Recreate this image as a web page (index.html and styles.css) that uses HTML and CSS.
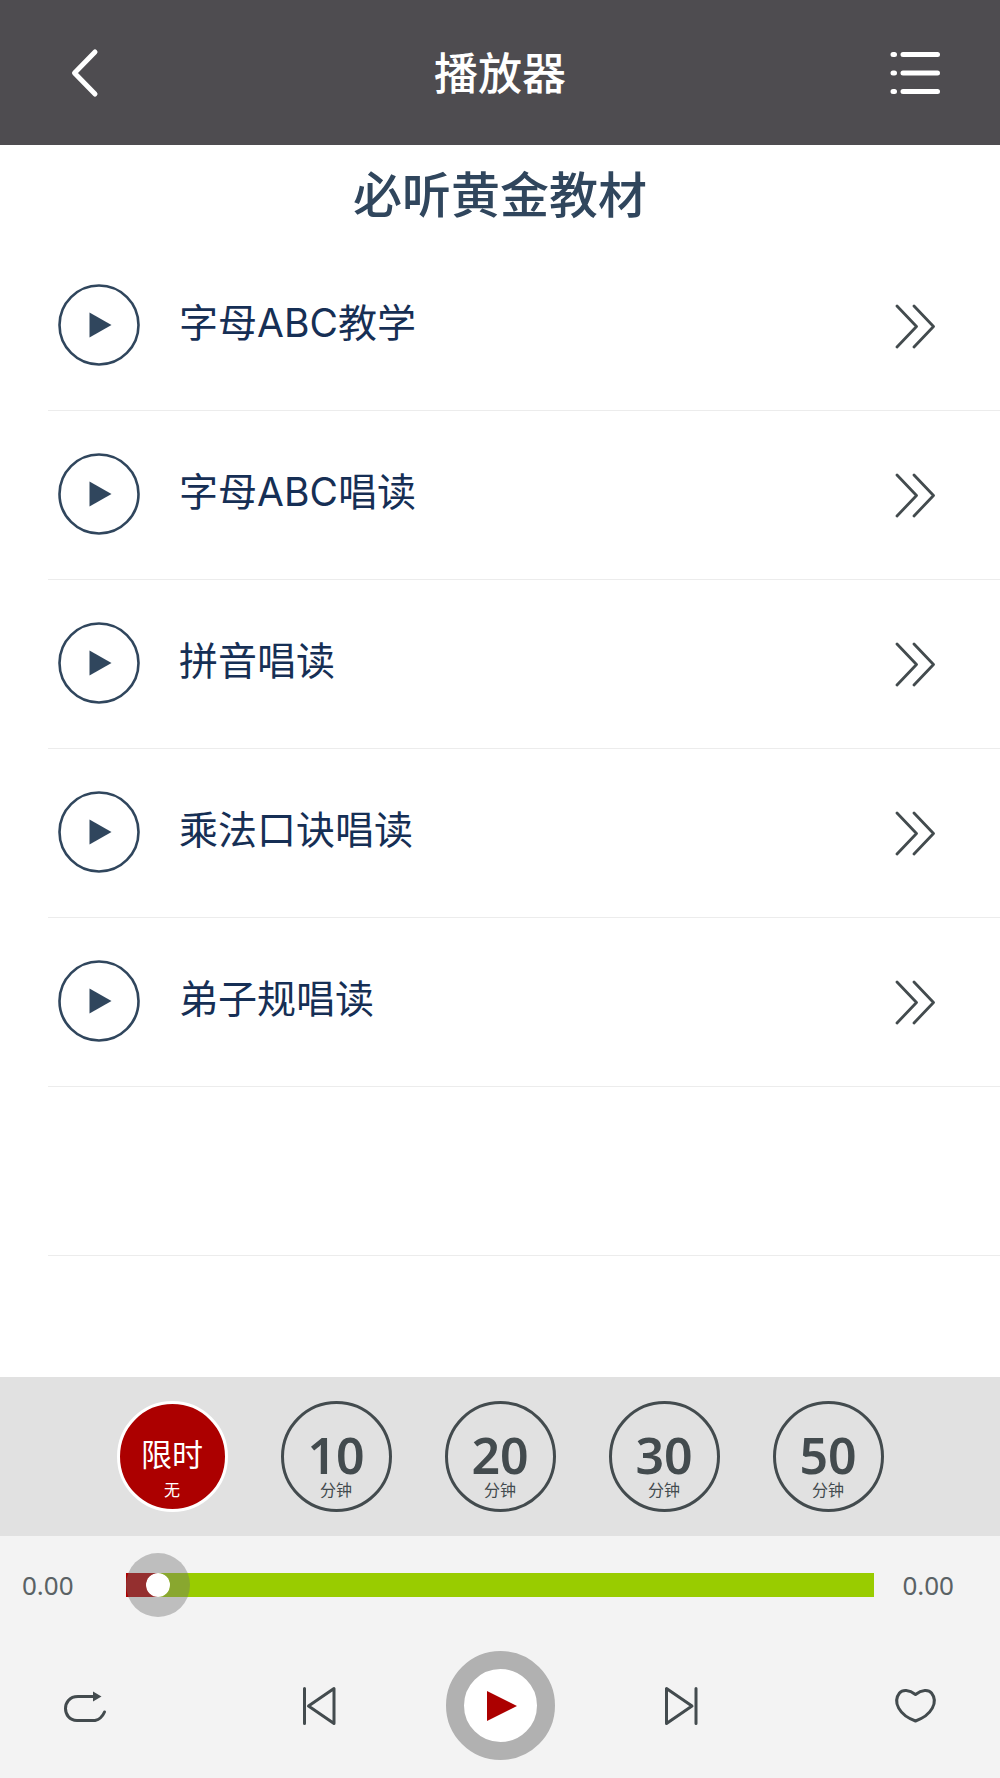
FILE: index.html
```html
<!DOCTYPE html>
<html lang="zh-CN">
<head>
<meta charset="utf-8">
<meta name="viewport" content="width=device-width, initial-scale=1">
<title>播放器</title>
<link rel="stylesheet" href="styles.css">
</head>
<body>
<svg class="sprite" aria-hidden="true">
  <symbol id="disc-play" viewBox="0 0 82 82"><circle cx="41" cy="41" r="39.500" fill="none" stroke="currentColor" stroke-width="2.600"/><path d="M31.500 28.500L53.500 41L31.500 53.500z" fill="currentColor"/></symbol>
  <symbol id="more" viewBox="0 0 40 46"><path d="M2 2L21.500 22.500L2 43M19 2L38.500 22.500L19 43" fill="none" stroke="currentColor" stroke-width="2.800" stroke-linecap="round" stroke-linejoin="round"/></symbol>
</svg>
<header class="topbar">
  <button class="icon-button" type="button" aria-label="返回">
    <svg width="50" height="50" viewBox="0 0 50 50"><path d="M35 4L14.500 25L35 46" fill="none" stroke="currentColor" stroke-width="5" stroke-linecap="round" stroke-linejoin="round"/></svg>
  </button>
  <h1 class="topbar-title">播放器</h1>
  <button class="icon-button" type="button" aria-label="列表">
    <svg width="50" height="50" viewBox="0 0 50 50"><path d="M3 6.500H4.500M13 6.500H47.500M3 25H4.500M13 25H47.500M3 43.500H4.500M13 43.500H47.500" fill="none" stroke="currentColor" stroke-width="5" stroke-linecap="round"/></svg>
  </button>
</header>
<main class="content">
  <h2 class="album">必听黄金教材</h2>
  <ul class="tracks">
    <li class="track"><button class="track-play" type="button" aria-label="播放"><svg width="82" height="82"><use href="#disc-play"/></svg></button><a class="track-link" href="#"><span class="track-name">字母ABC教学</span><svg class="more" width="40" height="46"><use href="#more"/></svg></a></li>
    <li class="track"><button class="track-play" type="button" aria-label="播放"><svg width="82" height="82"><use href="#disc-play"/></svg></button><a class="track-link" href="#"><span class="track-name">字母ABC唱读</span><svg class="more" width="40" height="46"><use href="#more"/></svg></a></li>
    <li class="track"><button class="track-play" type="button" aria-label="播放"><svg width="82" height="82"><use href="#disc-play"/></svg></button><a class="track-link" href="#"><span class="track-name">拼音唱读</span><svg class="more" width="40" height="46"><use href="#more"/></svg></a></li>
    <li class="track"><button class="track-play" type="button" aria-label="播放"><svg width="82" height="82"><use href="#disc-play"/></svg></button><a class="track-link" href="#"><span class="track-name">乘法口诀唱读</span><svg class="more" width="40" height="46"><use href="#more"/></svg></a></li>
    <li class="track"><button class="track-play" type="button" aria-label="播放"><svg width="82" height="82"><use href="#disc-play"/></svg></button><a class="track-link" href="#"><span class="track-name">弟子规唱读</span><svg class="more" width="40" height="46"><use href="#more"/></svg></a></li>
    <li class="track" aria-hidden="true"></li>
  </ul>
</main>
<section class="timers" aria-label="定时">
  <button class="timer timer-active" type="button"><span class="timer-label">限时</span><span class="timer-unit">无</span></button>
  <button class="timer" type="button"><span class="timer-value">10</span><span class="timer-unit">分钟</span></button>
  <button class="timer" type="button"><span class="timer-value">20</span><span class="timer-unit">分钟</span></button>
  <button class="timer" type="button"><span class="timer-value">30</span><span class="timer-unit">分钟</span></button>
  <button class="timer" type="button"><span class="timer-value">50</span><span class="timer-unit">分钟</span></button>
</section>
<footer class="player">
  <div class="progress">
    <label class="time" for="seek">0.00</label>
    <input class="seek" id="seek" type="range" min="0" max="100" value="0">
    <output class="time time-total" for="seek">0.00</output>
  </div>
  <div class="controls">
    <button class="icon-button" type="button" aria-label="循环">
      <svg width="50" height="50" viewBox="0 0 50 50"><path d="M34 15.500H18C9 15.500 5.500 22 5.500 27.500C5.500 33 9 39.500 17 39.500H35Q41.500 38 44.500 31" fill="none" stroke="currentColor" stroke-width="3" stroke-linecap="round"/><path d="M33 10.500L41.500 15.500L33 20.500z" fill="currentColor"/></svg>
    </button>
    <div class="transport">
      <button class="icon-button" type="button" aria-label="上一首">
        <svg width="50" height="50" viewBox="0 0 50 50"><path d="M9.500 7.500V42.500M39 7.500V42.500L13.500 25z" fill="none" stroke="currentColor" stroke-width="3" stroke-linecap="round" stroke-linejoin="round"/></svg>
      </button>
      <button class="play" type="button" aria-label="播放">
        <svg width="36" height="30" viewBox="0 0 36 30"><path d="M5 0L35 15L5 30z" fill="currentColor"/></svg>
      </button>
      <button class="icon-button" type="button" aria-label="下一首">
        <svg width="50" height="50" viewBox="0 0 50 50"><path d="M40 7.500V42.500M10.500 7.500V42.500L36 25z" fill="none" stroke="currentColor" stroke-width="3" stroke-linecap="round" stroke-linejoin="round"/></svg>
      </button>
    </div>
    <button class="icon-button" type="button" aria-label="收藏">
      <svg width="50" height="50" viewBox="0 0 50 50"><path d="M25.500 13.500C19 8.500 12.500 8.500 9.500 12C2.500 21 9 34 25.500 40C42 34 48.500 21 41.500 12C38.500 8.500 32 8.500 25.500 13.500z" fill="none" stroke="currentColor" stroke-width="3" stroke-linejoin="round"/></svg>
    </button>
  </div>
</footer>
</body>
</html>
```
FILE: styles.css
```css
* {
  box-sizing: border-box;
}

body {
  display: flex;
  flex-direction: column;
  min-height: 100vh;
  margin: 0;
  background: #fff;
  color: #434b4e;
  font-family: Inter, "Noto Sans CJK SC", sans-serif;
}

button {
  padding: 0;
  border: 0;
  background: none;
  color: inherit;
  font: inherit;
  cursor: pointer;
}

svg {
  display: block;
}

.sprite {
  display: none;
}

.icon-button {
  flex: none;
  width: 50px;
  height: 50px;
}

.topbar {
  display: flex;
  align-items: center;
  justify-content: space-between;
  height: 145px;
  padding: 0 60px;
  background: #4e4c50;
  color: #fff;
}

.topbar-title {
  margin: 0;
  padding-top: 2px;
  font-size: 44px;
  line-height: 64px;
  font-weight: 500;
}

.content {
  flex: 1;
}

.album {
  margin: 0;
  padding-top: 4px;
  color: #30465d;
  font-size: 49px;
  line-height: 93px;
  font-weight: 500;
  text-align: center;
}

.tracks {
  margin: 0;
  padding: 0 0 0 48px;
  list-style: none;
}

.track {
  display: flex;
  align-items: center;
  gap: 39px;
  height: 169px;
  padding: 0 65px 3px 10px;
  border-bottom: 1px solid #ececec;
}

.track-play {
  flex: none;
  color: #30465d;
}

.track-link {
  display: flex;
  flex: 1;
  align-items: center;
  justify-content: space-between;
  color: #162f55;
  font-size: 39px;
  line-height: 56px;
  text-decoration: none;
}

.track-name {
  padding-bottom: 4px;
}

.more {
  margin-top: 4px;
  color: #434b4e;
}

.timers {
  display: flex;
  align-items: center;
  justify-content: center;
  gap: 53px;
  height: 159px;
  background: #e1e1e1;
}

.timer {
  display: flex;
  flex-direction: column;
  align-items: center;
  width: 111px;
  height: 111px;
  padding-top: 26px;
  border: 3px solid #434b4e;
  border-radius: 50%;
}

.timer-active {
  border-color: #fff;
  background: #ac0000;
  color: #fff;
}

.timer-label,
.timer-value {
  font-size: 31px;
  line-height: 50px;
}

.timer-value {
  font-family: "Noto Sans", sans-serif;
  font-size: 50px;
  font-weight: 600;
}

.timer-unit {
  font-size: 16px;
  line-height: 20px;
}

.player {
  padding: 17px 0 18px;
  background: #f3f3f3;
}

.progress {
  display: grid;
  grid-template-columns: 104px 1fr 80px;
  align-items: center;
  height: 64px;
  padding: 0 46px 0 22px;
}

.time {
  color: #5a6265;
  font-family: "Noto Sans", sans-serif;
  font-size: 26px;
  line-height: 32px;
}

.time-total {
  text-align: right;
}

.seek {
  width: 100%;
  height: 64px;
  margin: 0;
  background: none;
  appearance: none;
}

.seek::-webkit-slider-runnable-track {
  height: 24px;
  background: linear-gradient(to right, #ac0000 32px, #9c0 32px);
}

.seek::-webkit-slider-thumb {
  width: 64px;
  height: 64px;
  margin-top: -20px;
  border: 20px solid rgba(114, 114, 114, 0.41);
  border-radius: 50%;
  background: #fff;
  background-clip: padding-box;
  appearance: none;
}

.controls {
  display: flex;
  align-items: center;
  justify-content: space-between;
  margin-top: 34px;
  padding: 0 60px;
}

.transport {
  display: flex;
  align-items: center;
  gap: 101px;
}

.play {
  display: grid;
  place-items: center;
  width: 109px;
  height: 109px;
  border: 18px solid #b1b1b1;
  border-radius: 50%;
  background: #fff;
  color: #ac0000;
}
```
